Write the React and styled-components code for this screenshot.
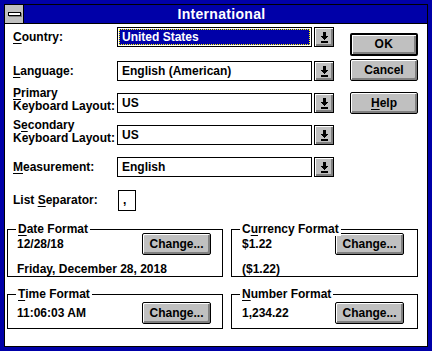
import React from 'react';
import styled, { createGlobalStyle } from 'styled-components';

const BLUE = '#0000a8';
const GRAY = '#c0c0c0';
const DARK = '#808080';

const Global = createGlobalStyle`
  html, body { margin: 0; padding: 0; background: ${BLUE}; }
  body {
    width: 432px; height: 351px; overflow: hidden;
    font-family: "Liberation Sans", Arial, sans-serif;
    font-weight: bold; font-size: 12px; color: #000;
  }
  * { box-sizing: border-box; }
  u { text-decoration-thickness: 1px; text-underline-offset: 2px; }
`;

const Frame = styled.div`
  width: 432px;
  height: 351px;
  background: ${BLUE};
  padding: 4px;
  display: flex;
`;

const Inner = styled.div`
  flex: 1;
  border: 1px solid #000;
  background: #fff;
  display: flex;
  flex-direction: column;
`;

const TitleBar = styled.div`
  height: 19px;
  display: flex;
  background: ${BLUE};
  border-bottom: 1px solid #000;
`;

const SysMenu = styled.div`
  width: 19px;
  background: ${GRAY};
  border-right: 1px solid #000;
  display: flex;
  align-items: center;
  justify-content: center;
`;

const SysBar = styled.div`
  width: 13px;
  height: 4px;
  background: #fff;
  border: 1px solid #000;
  box-shadow: 1px 1px 0 ${DARK};
`;

const Title = styled.div`
  flex: 1;
  color: #fff;
  font-size: 14px;
  letter-spacing: 0.3px;
  line-height: 18px;
  text-align: center;
  padding-right: 8px;
`;

const Body = styled.div`
  flex: 1;
  padding: 3px 6px 0 2px;
  display: flex;
  flex-direction: column;
`;

const Top = styled.div`
  display: flex;
  padding-left: 6px;
  gap: 16px;
`;

const Form = styled.div`
  width: 321px;
  display: flex;
  flex-direction: column;
  gap: 12px;
`;

const Row = styled.div`
  display: flex;
  align-items: center;
  height: 20px;
  margin-top: ${p => p.$mt || 0}px;
  margin-bottom: ${p => p.$mb || 0}px;
`;

const Label = styled.div`
  width: 104px;
  line-height: ${p => (p.$two ? 13 : 14)}px;
  white-space: nowrap;
  align-self: ${p => (p.$two ? 'flex-end' : 'center')};
  margin-bottom: ${p => (p.$two ? 0 : 0)}px;
`;

const Combo = styled.div`
  width: 217px;
  height: 20px;
  display: flex;
`;

const Field = styled.div`
  flex: 1;
  border: 1px solid #000;
  padding: 1px;
  display: flex;
`;

const FieldText = styled.div`
  flex: 1;
  display: flex;
  align-items: center;
  padding-left: 2px;
  line-height: 14px;
  background: ${p => (p.$sel ? BLUE : '#fff')};
  color: ${p => (p.$sel ? '#fff' : '#000')};
  border: 1px dotted ${p => (p.$sel ? '#ffff00' : 'transparent')};
`;

const ArrowBtn = styled.div`
  width: 20px;
  margin-left: 2px;
  border: 1px solid #000;
  background: ${GRAY};
  box-shadow: inset 1px 1px 0 #fff, inset -1px -1px 0 ${DARK}, inset -2px -2px 0 ${DARK};
  display: flex;
  align-items: center;
  justify-content: center;
`;

const SepBox = styled.div`
  width: 18px;
  height: 21px;
  border: 1px solid #000;
  padding: 2px 0 0 4px;
  line-height: 14px;
  margin-left: 1px;
`;

const Buttons = styled.div`
  display: flex;
  flex-direction: column;
  width: 68px;
  margin-top: 6px;
`;

const Button = styled.div`
  height: ${p => (p.$default ? 23 : 22)}px;
  width: ${p => p.$w || 68}px;
  border: ${p => (p.$default ? 2 : 1)}px solid #000;
  border-radius: 2px;
  background: ${GRAY};
  box-shadow: inset 1px 1px 0 #fff, inset -1px -1px 0 ${DARK}, inset -2px -2px 0 ${DARK};
  display: flex;
  align-items: center;
  justify-content: center;
  padding-bottom: 1px;
  margin-top: ${p => p.$mt || 0}px;
  font-size: 12px;
  letter-spacing: ${p => (p.$wide ? 0.5 : 0)}px;
`;

const Groups = styled.div`
  display: grid;
  grid-template-columns: 216px 187px;
  column-gap: 8px;
  row-gap: 10px;
  margin-top: 12px;
`;

const Group = styled.div`
  position: relative;
  border: 1px solid #000;
  margin-top: 7px;
  padding: ${p => p.$pad};
  display: grid;
  grid-template-columns: 1fr auto;
  align-items: center;
`;

const Legend = styled.div`
  position: absolute;
  top: -8px;
  left: 8px;
  background: #fff;
  padding: 0 2px 0 2px;
  line-height: 14px;
`;

const Value = styled.div`
  line-height: 14px;
  grid-column: ${p => (p.$full ? '1 / -1' : 'auto')};
  margin-top: ${p => p.$mt || 0}px;
`;

const DownArrow = () => (
  <svg width="9" height="11" viewBox="0 0 9 11" shapeRendering="crispEdges">
    <rect x="3" y="0" width="3" height="4" fill="#000" />
    <rect x="1" y="4" width="7" height="1" fill="#000" />
    <rect x="2" y="5" width="5" height="1" fill="#000" />
    <rect x="3" y="6" width="3" height="1" fill="#000" />
    <rect x="4" y="7" width="1" height="1" fill="#000" />
    <rect x="1" y="9" width="7" height="2" fill="#000" />
  </svg>
);

const ComboBox = ({ value, selected }) => (
  <Combo>
    <Field>
      <FieldText $sel={selected}>{value}</FieldText>
    </Field>
    <ArrowBtn>
      <DownArrow />
    </ArrowBtn>
  </Combo>
);

export default function App() {
  return (
    <>
      <Global />
      <Frame>
        <Inner>
          <TitleBar>
            <SysMenu>
              <SysBar />
            </SysMenu>
            <Title>International</Title>
          </TitleBar>
          <Body>
            <Top>
              <Form>
                <Row $mb={2}>
                  <Label><u>C</u>ountry:</Label>
                  <ComboBox value="United States" selected />
                </Row>
                <Row>
                  <Label><u>L</u>anguage:</Label>
                  <ComboBox value="English (American)" />
                </Row>
                <Row>
                  <Label $two><u>P</u>rimary<br />Keyboard Layout:</Label>
                  <ComboBox value="US" />
                </Row>
                <Row>
                  <Label $two>S<u>e</u>condary<br />Keyboard Layout:</Label>
                  <ComboBox value="US" />
                </Row>
                <Row>
                  <Label><u>M</u>easurement:</Label>
                  <ComboBox value="English" />
                </Row>
                <Row $mt={1}>
                  <Label>List <u>S</u>eparator:</Label>
                  <SepBox>,</SepBox>
                </Row>
              </Form>
              <Buttons>
                <Button $default $wide>OK</Button>
                <Button $mt={3}>Cancel</Button>
                <Button $mt={11}><span><u>H</u>elp</span></Button>
              </Buttons>
            </Top>
            <Groups>
              <Group $pad="3px 11px 0 9px">
                <Legend><u>D</u>ate Format</Legend>
                <Value>12/28/18</Value>
                <Button $w={69}>Change...</Button>
                <Value $full $mt={7}>Friday, December 28, 2018</Value>
              </Group>
              <Group $pad="3px 13px 0 10px">
                <Legend>C<u>u</u>rrency Format</Legend>
                <Value>$1.22</Value>
                <Button $w={69}>Change...</Button>
                <Value $full $mt={7}>($1.22)</Value>
              </Group>
              <Group $pad="7px 11px 4px 9px">
                <Legend><u>T</u>ime Format</Legend>
                <Value>11:06:03 AM</Value>
                <Button $w={69}>Change...</Button>
              </Group>
              <Group $pad="7px 13px 4px 10px">
                <Legend><u>N</u>umber Format</Legend>
                <Value>1,234.22</Value>
                <Button $w={69}>Change...</Button>
              </Group>
            </Groups>
          </Body>
        </Inner>
      </Frame>
    </>
  );
}
